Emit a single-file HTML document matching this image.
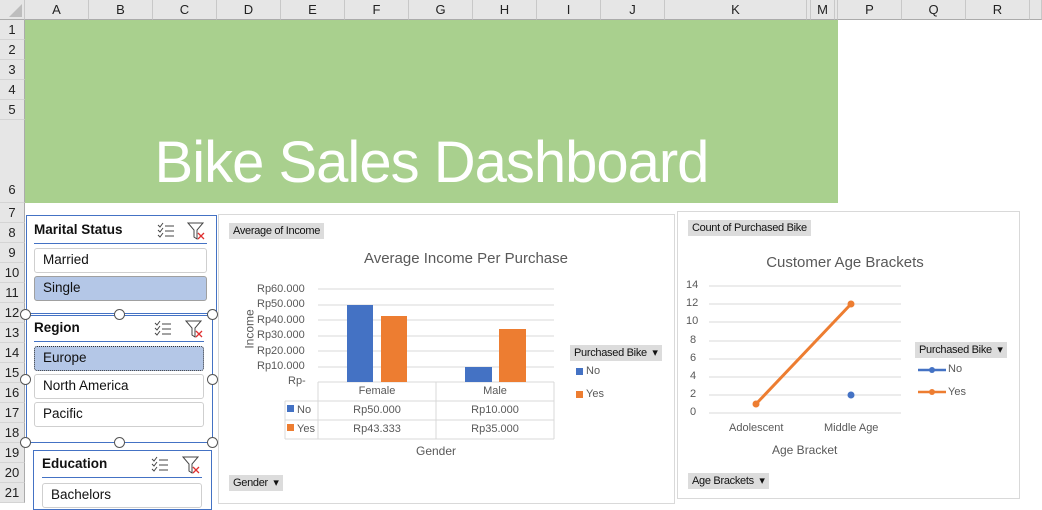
<!DOCTYPE html>
<html><head><meta charset="utf-8"><style>
*{margin:0;padding:0;box-sizing:border-box}
body{width:1042px;height:500px;overflow:hidden;background:#fff;font-family:"Liberation Sans",Arial,sans-serif;position:relative}
.abs{position:absolute}
.ch{position:absolute;top:0;height:20px;background:#e6e6e6;border-right:1px solid #c8c8c8;border-bottom:1px solid #ababab;font-size:13px;color:#222;text-align:center;line-height:20px}
.rh{position:absolute;left:0;width:25px;background:#e6e6e6;border-bottom:1px solid #d4d4d4;border-right:1px solid #ababab;font-size:13px;color:#222;text-align:center}
.sl{position:absolute;background:#fff;border:1px solid #4472c4}
.sh{position:absolute;font-weight:bold;font-size:13.5px;color:#111}
.ul{position:absolute;height:1px;background:#4472c4}
.it{position:absolute;border:1px solid #cfcfcf;border-radius:3px;font-size:13.5px;color:#111;padding-left:8px;line-height:22px;background:#fff}
.sel{background:#b4c7e7;border-color:#a0a0a0}
.hd{position:absolute;width:11px;height:11px;border:1.5px solid #555;border-radius:50%;background:#fff}
.btn{position:absolute;background:#dcdcdc;font-size:11px;color:#111;padding:0 4px;line-height:16px;letter-spacing:-0.3px}
.t{position:absolute;font-size:11px;color:#595959;white-space:nowrap}
</style></head><body>
<!-- headers -->
<div class="ch" style="left:0;width:25px"><svg width="25" height="20" style="position:absolute;left:0;top:0"><polygon points="22,4 22,17 9,17" fill="#bdbdbd"/></svg></div>
<div class="ch" style="left:25px;width:64px">A</div><div class="ch" style="left:89px;width:64px">B</div><div class="ch" style="left:153px;width:64px">C</div><div class="ch" style="left:217px;width:64px">D</div><div class="ch" style="left:281px;width:64px">E</div><div class="ch" style="left:345px;width:64px">F</div><div class="ch" style="left:409px;width:64px">G</div><div class="ch" style="left:473px;width:64px">H</div><div class="ch" style="left:537px;width:64px">I</div><div class="ch" style="left:601px;width:64px">J</div><div class="ch" style="left:665px;width:142px">K</div><div class="ch" style="left:807px;width:4px"></div><div class="ch" style="left:811px;width:24px">M</div><div class="ch" style="left:835px;width:3px"></div><div class="ch" style="left:838px;width:64px">P</div><div class="ch" style="left:902px;width:64px">Q</div><div class="ch" style="left:966px;width:64px">R</div><div class="ch" style="left:1030px;width:12px"></div>
<div class="rh" style="top:20px;height:20px;line-height:20px">1</div><div class="rh" style="top:40px;height:20px;line-height:20px">2</div><div class="rh" style="top:60px;height:20px;line-height:20px">3</div><div class="rh" style="top:80px;height:20px;line-height:20px">4</div><div class="rh" style="top:100px;height:20px;line-height:20px">5</div><div class="rh" style="top:120px;height:83px;line-height:140px">6</div>
<div class="rh" style="top:203px;height:20px;line-height:20px">7</div><div class="rh" style="top:223px;height:20px;line-height:20px">8</div><div class="rh" style="top:243px;height:20px;line-height:20px">9</div><div class="rh" style="top:263px;height:20px;line-height:20px">10</div><div class="rh" style="top:283px;height:20px;line-height:20px">11</div><div class="rh" style="top:303px;height:20px;line-height:20px">12</div><div class="rh" style="top:323px;height:20px;line-height:20px">13</div><div class="rh" style="top:343px;height:20px;line-height:20px">14</div><div class="rh" style="top:363px;height:20px;line-height:20px">15</div><div class="rh" style="top:383px;height:20px;line-height:20px">16</div><div class="rh" style="top:403px;height:20px;line-height:20px">17</div><div class="rh" style="top:423px;height:20px;line-height:20px">18</div><div class="rh" style="top:443px;height:20px;line-height:20px">19</div><div class="rh" style="top:463px;height:20px;line-height:20px">20</div><div class="rh" style="top:483px;height:20px;line-height:20px">21</div>
<!-- banner -->
<div class="abs" style="left:25px;top:20px;width:813px;height:183px;background:#a9d08e"></div>
<div class="abs" style="left:25px;top:128px;width:813px;text-align:center;color:#fff;font-size:58px;font-family:'Liberation Sans',sans-serif;letter-spacing:-1px;line-height:70px">Bike Sales Dashboard</div>

<svg width="0" height="0" style="position:absolute"><defs>
<g id="ms"><path d="M1 3 l2 2 l3 -4 M1 8 l2 2 l3 -4 M1 13 l2 2 l3 -4" stroke="#444" fill="none" stroke-width="1"/><path d="M8 4h9 M8 9h9 M8 14h9" stroke="#444" stroke-width="1"/></g>
<g id="fx"><path d="M1 1h15l-6 7v9l-3 -2v-7z" stroke="#444" fill="none" stroke-width="1"/><path d="M11 11l6 6M17 11l-6 6" stroke="#e03030" stroke-width="1.3"/></g>
</defs></svg>

<!-- Slicer 1 -->
<div class="sl" style="left:26px;top:215px;width:191px;height:99px"></div>
<div class="sh" style="left:34px;top:222px">Marital Status</div>
<svg class="abs" style="left:157px;top:222px" width="20" height="18"><use href="#ms"/></svg>
<svg class="abs" style="left:187px;top:222px" width="20" height="18"><use href="#fx"/></svg>
<div class="ul" style="left:34px;top:243px;width:173px"></div>
<div class="it" style="left:34px;top:248px;width:173px;height:25px">Married</div>
<div class="it sel" style="left:34px;top:276px;width:173px;height:25px">Single</div>
<!-- Slicer 2 -->
<div class="sl" style="left:26px;top:315px;width:187px;height:128px;border-width:1.5px"></div>
<div class="sh" style="left:34px;top:320px">Region</div>
<svg class="abs" style="left:154px;top:320px" width="20" height="18"><use href="#ms"/></svg>
<svg class="abs" style="left:185px;top:320px" width="20" height="18"><use href="#fx"/></svg>
<div class="ul" style="left:34px;top:341px;width:170px"></div>
<div class="it sel" style="left:34px;top:346px;width:170px;height:25px;border:1px dotted #333">Europe</div>
<div class="it" style="left:34px;top:374px;width:170px;height:25px">North America</div>
<div class="it" style="left:34px;top:402px;width:170px;height:25px">Pacific</div>
<div class="hd" style="left:20px;top:309px"></div><div class="hd" style="left:114px;top:309px"></div><div class="hd" style="left:207px;top:309px"></div>
<div class="hd" style="left:20px;top:374px"></div><div class="hd" style="left:207px;top:374px"></div>
<div class="hd" style="left:20px;top:437px"></div><div class="hd" style="left:114px;top:437px"></div><div class="hd" style="left:207px;top:437px"></div>
<!-- Slicer 3 -->
<div class="sl" style="left:33px;top:450px;width:179px;height:60px"></div>
<div class="sh" style="left:42px;top:456px">Education</div>
<svg class="abs" style="left:151px;top:456px" width="20" height="18"><use href="#ms"/></svg>
<svg class="abs" style="left:182px;top:456px" width="20" height="18"><use href="#fx"/></svg>
<div class="ul" style="left:42px;top:477px;width:160px"></div>
<div class="it" style="left:42px;top:483px;width:160px;height:25px">Bachelors</div>

<!-- Chart 1 -->
<div class="abs" style="left:218px;top:214px;width:457px;height:290px;border:1px solid #d9d9d9;background:#fff"></div>
<div class="btn" style="left:229px;top:223px">Average of Income</div>
<div class="t" style="left:218px;top:250px;width:496px;text-align:center;font-size:15px">Average Income Per Purchase</div>
<div class="t" style="left:230px;top:322px;transform:rotate(-90deg);font-size:12px">Income</div>
<div class="t" style="left:257px;top:283px">Rp60.000</div>
<div class="t" style="left:257px;top:298px">Rp50.000</div>
<div class="t" style="left:257px;top:314px">Rp40.000</div>
<div class="t" style="left:257px;top:329px">Rp30.000</div>
<div class="t" style="left:257px;top:345px">Rp20.000</div>
<div class="t" style="left:257px;top:360px">Rp10.000</div>
<div class="t" style="left:288px;top:375px">Rp-</div>
<svg class="abs" style="left:218px;top:270px" width="360" height="200">
<g stroke="#d9d9d9" stroke-width="1">
<line x1="100" y1="19" x2="336" y2="19"/><line x1="100" y1="35" x2="336" y2="35"/><line x1="100" y1="50" x2="336" y2="50"/><line x1="100" y1="66" x2="336" y2="66"/><line x1="100" y1="81" x2="336" y2="81"/><line x1="100" y1="97" x2="336" y2="97"/>
<line x1="100" y1="112" x2="336" y2="112"/><line x1="67" y1="131" x2="336" y2="131"/><line x1="67" y1="150" x2="336" y2="150"/><line x1="67" y1="169" x2="336" y2="169"/>
<line x1="100" y1="112" x2="100" y2="169"/><line x1="218" y1="112" x2="218" y2="169"/><line x1="336" y1="112" x2="336" y2="169"/><line x1="67" y1="131" x2="67" y2="169"/>
</g>
<rect x="129" y="35" width="26" height="77" fill="#4472c4"/>
<rect x="163" y="46" width="26" height="66" fill="#ed7d31"/>
<rect x="247" y="97" width="27" height="15" fill="#4472c4"/>
<rect x="281" y="59" width="27" height="53" fill="#ed7d31"/>
<rect x="69" y="135" width="7" height="7" fill="#4472c4"/><rect x="69" y="154" width="7" height="7" fill="#ed7d31"/>
</svg>
<div class="t" style="left:318px;top:385px;width:118px;text-align:center">Female</div>
<div class="t" style="left:436px;top:385px;width:118px;text-align:center">Male</div>
<div class="t" style="left:297px;top:404px">No</div><div class="t" style="left:297px;top:423px">Yes</div>
<div class="t" style="left:318px;top:404px;width:118px;text-align:center">Rp50.000</div>
<div class="t" style="left:436px;top:404px;width:118px;text-align:center">Rp10.000</div>
<div class="t" style="left:318px;top:423px;width:118px;text-align:center">Rp43.333</div>
<div class="t" style="left:436px;top:423px;width:118px;text-align:center">Rp35.000</div>
<div class="t" style="left:416px;top:444px;font-size:12px">Gender</div>
<div class="btn" style="left:570px;top:345px">Purchased Bike &nbsp;▾</div>
<div class="abs" style="left:576px;top:368px;width:7px;height:7px;background:#4472c4"></div><div class="t" style="left:586px;top:365px">No</div>
<div class="abs" style="left:576px;top:391px;width:7px;height:7px;background:#ed7d31"></div><div class="t" style="left:586px;top:388px">Yes</div>
<div class="btn" style="left:229px;top:475px">Gender &nbsp;▾</div>

<!-- Chart 2 -->
<div class="abs" style="left:677px;top:211px;width:343px;height:288px;border:1px solid #d9d9d9;background:#fff"></div>
<div class="btn" style="left:688px;top:220px">Count of Purchased Bike</div>
<div class="t" style="left:720px;top:254px;width:250px;text-align:center;font-size:15px">Customer Age Brackets</div>
<svg class="abs" style="left:677px;top:270px" width="240" height="150">
<g stroke="#d9d9d9"><line x1="32" y1="16" x2="224" y2="16"/><line x1="32" y1="34" x2="224" y2="34"/><line x1="32" y1="52" x2="224" y2="52"/><line x1="32" y1="71" x2="224" y2="71"/><line x1="32" y1="89" x2="224" y2="89"/><line x1="32" y1="107" x2="224" y2="107"/><line x1="32" y1="125" x2="224" y2="125"/><line x1="32" y1="143" x2="224" y2="143"/></g>
<line x1="79" y1="134" x2="174" y2="34" stroke="#ed7d31" stroke-width="3"/>
<circle cx="79" cy="134" r="3.5" fill="#ed7d31"/><circle cx="174" cy="34" r="3.5" fill="#ed7d31"/>
<circle cx="174" cy="125" r="3.5" fill="#4472c4"/>
</svg>
<div class="t" style="left:686px;top:279px">14</div><div class="t" style="left:686px;top:297px">12</div><div class="t" style="left:686px;top:315px">10</div><div class="t" style="left:690px;top:334px">8</div><div class="t" style="left:690px;top:352px">6</div><div class="t" style="left:690px;top:370px">4</div><div class="t" style="left:690px;top:388px">2</div><div class="t" style="left:690px;top:406px">0</div>
<div class="t" style="left:729px;top:422px">Adolescent</div><div class="t" style="left:824px;top:422px">Middle Age</div>
<div class="t" style="left:772px;top:443px;font-size:12px">Age Bracket</div>
<div class="btn" style="left:915px;top:342px">Purchased Bike &nbsp;▾</div>
<svg class="abs" style="left:918px;top:363px" width="30" height="35"><line x1="0" y1="7" x2="28" y2="7" stroke="#4472c4" stroke-width="2.5"/><circle cx="14" cy="7" r="3" fill="#4472c4"/><line x1="0" y1="29" x2="28" y2="29" stroke="#ed7d31" stroke-width="2.5"/><circle cx="14" cy="29" r="3" fill="#ed7d31"/></svg>
<div class="t" style="left:948px;top:363px">No</div><div class="t" style="left:948px;top:386px">Yes</div>
<div class="btn" style="left:688px;top:473px">Age Brackets &nbsp;▾</div>
</body></html>
